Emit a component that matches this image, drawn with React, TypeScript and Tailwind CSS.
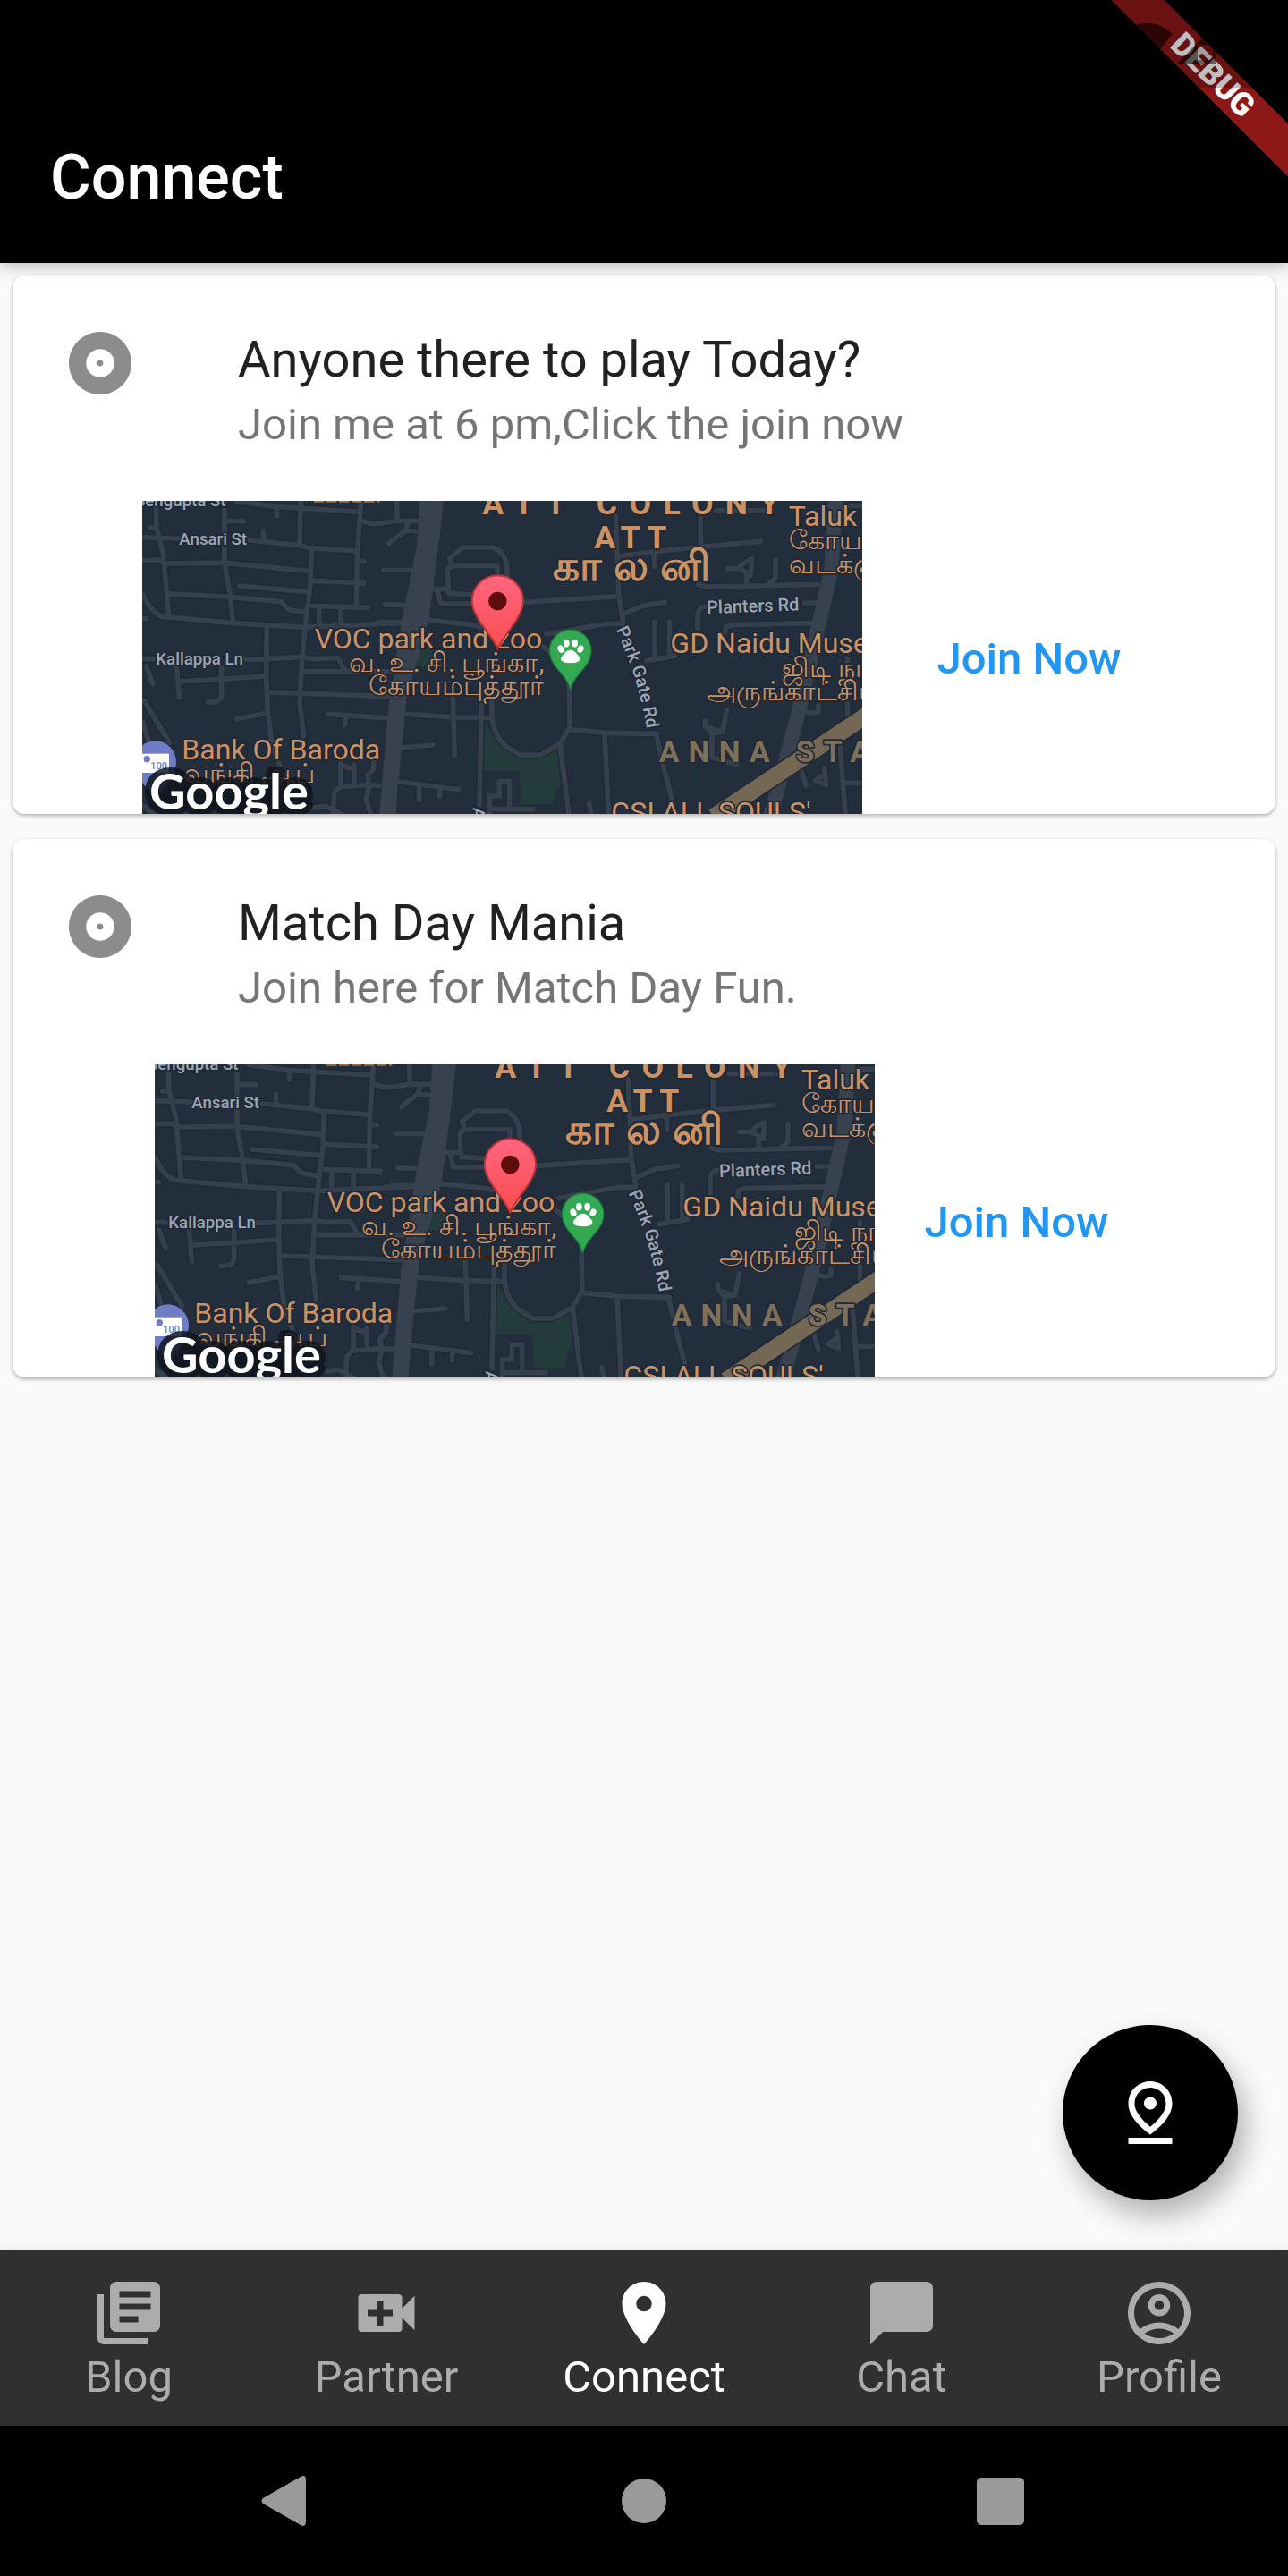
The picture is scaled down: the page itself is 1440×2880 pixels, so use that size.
import React, { useState } from 'react';
import {
  MdAlbum,
  MdChatBubble,
  MdLibraryBooks,
  MdLocationOn,
  MdOutlineAccountCircle,
  MdOutlinePinDrop,
  MdVideoCall,
} from 'react-icons/md';

const events = [
  {
    title: 'Anyone there to play Today?',
    subtitle: 'Join me at 6 pm,Click the join now',
    gap: 'gap-14',
  },
  {
    title: 'Match Day Mania',
    subtitle: 'Join here for Match Day Fun.',
    gap: 'gap-7',
  },
];

const tabs = [
  { name: 'Blog', Icon: MdLibraryBooks },
  { name: 'Partner', Icon: MdVideoCall },
  { name: 'Connect', Icon: MdLocationOn },
  { name: 'Chat', Icon: MdChatBubble },
  { name: 'Profile', Icon: MdOutlineAccountCircle },
];

const streets = [
  // west side
  'M70 30 L72 120 L95 210 L112 410 M24 152 L145 156 M50 120 H72 M24 230 L80 228 L105 240 L300 238 L585 265',
  'M300 60 V240 L318 340 L328 430 M300 98 H365 M385 162 L545 178 L590 188 L740 198 M430 130 V160',
  'M340 32 L480 50 L745 66 M475 50 V80 M556 30 L552 175 M757 40 L745 210 L742 380 M752 232 H768 M598 298 L768 306',
  'M592 195 L588 310 L575 410 L560 560 L552 700 L565 820 M350 315 L580 335 M112 342 L315 352 L490 368 L515 395 L575 404',
  'M595 382 L780 388 M24 340 Q50 400 90 418 L330 440 L570 454 M570 454 L890 440 M24 425 H38',
  'M442 460 L440 620 L445 740 L460 850 L490 930 M365 562 L440 560 L560 553 L600 560 L680 556 L705 600 M24 560 H60',
  'M140 590 L148 690 M148 636 L290 628 L435 618 M290 590 V680 Q290 706 245 706 M38 585 L60 645',
  'M570 602 L870 602 M455 672 L850 686 M340 762 L440 742 M650 745 L845 758 M707 755 L703 782',
  'M617 390 V450 M690 390 V450 M30 700 L115 840 M26 770 L44 830',
  // around the main street
  'M910 745 L1060 755 L1190 758 M1066 690 L1072 886 M890 858 L998 849 M885 972 L1085 998 M953 985 V1035 M1022 992 V1022',
  'M878 30 L880 95 M765 98 L800 108 L880 97 L950 97 M915 108 L905 130 L852 172 M905 130 L940 132',
  'M834 262 H930 M838 377 L910 380 M788 445 L820 437 H900',
  'M1060 235 L1055 222 L1100 186 H1200 Q1240 202 1248 250 V300 M1215 290 V248 H1072 Q1046 248 1048 272 L1052 340 L1130 345',
  'M990 325 H1040 M1015 330 L1025 375 H1130 M985 430 L1130 445 L1230 470',
  'M690 910 V990 M735 915 V970 M690 915 L735 930 M800 905 V930 L780 950 L785 990 L775 1030 L790 1080 M690 985 L668 1010 L664 1080 M690 990 L785 982 L820 985',
  'M24 1050 L60 1080 M590 1060 L640 1055 L690 1080 M1162 690 L1155 1050 M1190 1080 V1020 H1222 V970 H1256 V1062 M1190 1064 H1335',
  // zoo ring and east side
  'M1300 370 L1620 350 M1380 478 L1580 442 L1635 442 M1612 80 L1622 340 L1637 435 M1370 520 L1395 540',
  'M1455 640 L1458 790 L1425 845 L1360 882 H1290 L1240 850 Q1200 810 1197 750 V690',
  'M1458 796 L1580 808 L1750 811 M1425 845 L1455 1080 M1575 815 L1588 1080 M1748 815 L1772 920 L1802 1035 M1523 1045 L1530 1080',
  'M1622 216 L1740 200 L1900 184 L2100 166 M1897 85 V184 M1740 200 L1742 250 M1637 410 L1700 382 L1778 370',
  'M1890 310 L1915 318 L2290 310 M1985 257 H2030 L2065 280 L2068 224 L2032 245 V262 M2050 280 V312 M2148 228 V290 L2125 308',
  'M1887 475 V420 Q1885 390 1912 384 M1980 470 V455 L2000 446 L2270 440 M1743 435 V560 M1793 435 V545 M1715 566 L1810 550 M2245 372 H2290',
  'M1985 730 L1970 805 L1935 808 L1912 786 V766 M1935 810 V890 L2020 915 M1912 786 L1970 805 M2292 715 V738 L2268 742 L2245 735',
  'M2365 850 L2382 1080 M2382 976 H2430 M2390 710 V760 M2235 935 L2250 985 M2312 925 L2318 984 L2282 968 L2315 945 M1950 62 H2110 M2330 46 H2439 M2390 560 V640',
];

function PlaceLabel({ x, y, size, anchor, weight, spacing, color, rotate, children }: {
  x: number;
  y: number;
  size: string;
  anchor?: 'end';
  weight?: string;
  spacing?: string;
  color?: string;
  rotate?: number;
  children: React.ReactNode;
}) {
  return (
    <text
      x={x}
      y={y}
      textAnchor={anchor}
      transform={rotate ? `rotate(${rotate} ${x} ${y})` : undefined}
      className={`${size} ${weight ?? 'font-normal'} ${spacing ?? ''} ${color ?? 'fill-[#cd9263]'}`}
      stroke="#1f2937"
      strokeWidth="10"
      strokeLinejoin="round"
      paintOrder="stroke"
    >
      {children}
    </text>
  );
}

function MapPreview({ id }: { id: string }) {
  const road = 'fill-[#9ca5b3]';
  return (
    <svg viewBox="24 30 2415 1050" className="block w-[805px] h-[350px] shrink-0 bg-[#232e3d]" role="img" aria-label="Map of VOC park and zoo">
      <defs>
        <linearGradient id={`${id}-pin`} x1="0" y1="0" x2="0" y2="1">
          <stop offset="0" stopColor="#ff6580" />
          <stop offset="1" stopColor="#fb4d50" />
        </linearGradient>
        <path id={`${id}-gate`} d="M1612 462 Q1690 620 1722 830" />
      </defs>

      <path d="M1172 768 L1210 830 L1290 890 H1360 L1415 865 L1427 990 L1410 995 L1400 1048 H1295 L1290 935 H1170 Z M950 520 H1012 L1000 585 H930 Z" fill="#243b3c" />

      <g fill="none" stroke="#1f2937" strokeWidth="25" strokeLinecap="round" strokeLinejoin="round">
        {streets.map((d) => <path key={d} d={d} />)}
      </g>
      <g fill="none" stroke="#36404d" strokeWidth="17" strokeLinecap="round" strokeLinejoin="round">
        {streets.map((d) => <path key={d} d={d} />)}
      </g>
      <path d="M955 30 L945 180 L895 430 L870 600 L850 720 L820 1080 H875 L880 1000 L912 680 L940 590 L985 430 L1015 200 L1035 30 Z" fill="#38424f" />
      <path d="M2350 30 L2335 260 L2290 460 L2225 740 L2185 890 L2130 1090" fill="none" stroke="#38424f" strokeWidth="48" />
      <path d="M1940 1090 L2470 738" fill="none" stroke="#1f2835" strokeWidth="66" />
      <path d="M1940 1090 L2470 738" fill="none" stroke="#746855" strokeWidth="56" />

      <PlaceLabel x={0} y={48} size="text-[56px]" weight="font-medium" color={road}>Sengupta St</PlaceLabel>
      <PlaceLabel x={148} y={178} size="text-[56px]" weight="font-medium" color={road}>Ansari St</PlaceLabel>
      <PlaceLabel x={70} y={579} size="text-[56px]" weight="font-medium" color={road}>Kallappa Ln</PlaceLabel>
      <PlaceLabel x={1918} y={408} size="text-[60px]" weight="font-medium" color={road} rotate={-2}>Planters Rd</PlaceLabel>
      <PlaceLabel x={1134} y={1058} size="text-[56px]" weight="font-medium" color={road} rotate={92}>A</PlaceLabel>
      <text className="text-[60px] font-medium fill-[#9ca5b3]" stroke="#1f2937" strokeWidth="10" paintOrder="stroke">
        <textPath href={`#${id}-gate`}>Park Gate Rd</textPath>
      </text>

      <path d="M600 30 H820" stroke="#a86f35" strokeWidth="10" strokeDasharray="34 8" />
      <PlaceLabel x={1165} y={74} size="text-[107px]" weight="font-bold" spacing="tracking-[40px]">ATT COLONY</PlaceLabel>
      <PlaceLabel x={1540} y={188} size="text-[107px]" weight="font-bold" spacing="tracking-[22px]">ATT</PlaceLabel>
      <PlaceLabel x={1400} y={298} size="text-[140px]" weight="font-bold" spacing="tracking-[40px]">காலனி</PlaceLabel>
      <PlaceLabel x={2192} y={113} size="text-[96px]">Taluk</PlaceLabel>
      <PlaceLabel x={2192} y={193} size="text-[90px]">கோயம்பு</PlaceLabel>
      <PlaceLabel x={2192} y={272} size="text-[90px]">வடக்கு</PlaceLabel>
      <PlaceLabel x={602} y={524} size="text-[96px]">VOC park and zoo</PlaceLabel>
      <PlaceLabel x={1372} y={604} size="text-[90px]" anchor="end">வ. உ. சி. பூங்கா,</PlaceLabel>
      <PlaceLabel x={1372} y={682} size="text-[90px]" anchor="end">கோயம்புத்தூர்</PlaceLabel>
      <PlaceLabel x={1795} y={541} size="text-[96px]">GD Naidu Museum</PlaceLabel>
      <PlaceLabel x={2170} y={620} size="text-[90px]">ஜிடி நாயுடு</PlaceLabel>
      <PlaceLabel x={1918} y={698} size="text-[90px]">அருங்காட்சியகம்</PlaceLabel>
      <PlaceLabel x={1757} y={907} size="text-[101px]" weight="font-bold" spacing="tracking-[31px]" color="fill-[#80705a]">ANNA STATUE</PlaceLabel>
      <PlaceLabel x={1597} y={1108} size="text-[96px]">CSI ALL SOULS'</PlaceLabel>

      {/* bank marker */}
      <path d="M-2 905 a70 70 0 0 1 140 0 q0 50 -70 120 q-70 -70 -70 -120 Z" fill="#6f7cc6" />
      <path d="M24 878 H114 V942 H24 Z" fill="#fff" />
      <circle cx="40" cy="896" r="11" fill="#6f7cc6" />
      <text x="52" y="930" className="text-[33px] font-medium" fill="#6f7cc6">100</text>
      <PlaceLabel x={157} y={898} size="text-[96px]">Bank Of Baroda</PlaceLabel>
      <PlaceLabel x={162} y={975} size="text-[90px]">வங்கி ஆப்</PlaceLabel>
      <text
        x="48"
        y="1066"
        className="font-[Lato] text-[168px] font-bold"
        fill="#fff"
        stroke="#10151d"
        strokeOpacity="0.85"
        strokeWidth="42"
        strokeLinejoin="round"
        paintOrder="stroke"
      >
        Google
      </text>

      {/* zoo marker */}
      <path d="M1460 662 C1450 610 1391 590 1391 532 a69 69 0 0 1 138 0 C1529 590 1470 610 1460 662 Z" fill="#34a853" stroke="#1f8a3e" strokeWidth="4" />
      <g fill="#fff">
        <ellipse cx="1428" cy="527" rx="10" ry="13" transform="rotate(-25 1428 527)" />
        <ellipse cx="1447" cy="508" rx="10" ry="13" />
        <ellipse cx="1475" cy="508" rx="10" ry="13" />
        <ellipse cx="1494" cy="527" rx="10" ry="13" transform="rotate(25 1494 527)" />
        <path d="M1460 530 q14 0 24 16 q14 12 4 22 q-8 7 -28 5 q-20 2 -28 -5 q-10 -10 4 -22 q10 -16 24 -16 Z" />
      </g>

      {/* selected place */}
      <path d="M1216 526 C1196 478 1130 420 1130 366 a86 86 0 0 1 172 0 C1302 420 1236 478 1216 526 Z" fill={`url(#${id}-pin)`} stroke="#b93434" strokeWidth="6" />
      <circle cx="1216" cy="366" r="31" fill="#5e0c0c" />
    </svg>
  );
}

function EventCard({ event, id }: { event: (typeof events)[number]; id: string }) {
  return (
    <article className="rounded-[14px] bg-white shadow-[0_2px_4px_rgba(0,0,0,0.3)]">
      <div className="flex items-start px-14 pt-14 pb-14">
        <MdAlbum className="size-[84px] shrink-0 text-[#8c8c8c]" />
        <div className="ml-28 pt-[6px]">
          <h2 className="text-[56px] leading-[64px] text-[#212121]">{event.title}</h2>
          <p className="mt-3 text-[49px] leading-[58px] text-[#757575]">{event.subtitle}</p>
        </div>
      </div>
      <div className={`flex items-center justify-center ${event.gap}`}>
        <MapPreview id={id} />
        <button className="w-[262px] pt-5 pb-4 text-[49px] leading-[58px] font-medium text-[#2196f3] whitespace-nowrap cursor-pointer">Join Now</button>
      </div>
    </article>
  );
}

function DebugRibbon() {
  return (
    <div className="absolute top-0 right-0 size-[210px] overflow-hidden">
      <div className="absolute top-[63px] -left-[24px] w-[300px] rotate-45 bg-[#8e1717] text-center text-[36px] leading-[42px] font-black text-white">DEBUG</div>
      {/* status bar shade with its wifi and signal icons */}
      <svg viewBox="0 0 210 98" className="absolute top-0 left-0 h-[98px] w-[210px]" fill="#000">
        <path d="M0 0 H210 V98 H0 Z" fillOpacity="0.25" />
        <path d="M10 39 Q32 26 55 26 Q67 26 81 38 L53 72 Z" fillOpacity="0.6" />
        <path d="M86 71 L130 27 V50 H109 V71 Z" fillOpacity="0.55" />
        <path d="M109 71 V50 H130 V71 Z" fillOpacity="0.15" />
        <path d="M126 50 H130 V71 H109 V67 H126 Z" fillOpacity="0.4" />
      </svg>
    </div>
  );
}

export default function App() {
  const [active, setActive] = useState('Connect');

  return (
    <div className="flex min-h-screen flex-col bg-[#fafafa] font-[Roboto,'Noto_Sans',sans-serif]">
      <header className="relative z-10 bg-black px-14 pt-[157px] pb-[55px] shadow-[0_4px_16px_rgba(0,0,0,0.25)]">
        <h1 className="text-[70px] leading-[82px] font-medium text-white">Connect</h1>
        <DebugRibbon />
      </header>

      <main className="relative flex flex-1 flex-col gap-7 p-[14px]">
        {events.map((event, i) => (
          <EventCard key={event.title} event={event} id={`map-${i}`} />
        ))}
        <button
          aria-label="Drop a pin"
          className="absolute right-14 bottom-14 flex size-[196px] cursor-pointer items-center justify-center rounded-full bg-black text-white shadow-[8px_16px_32px_rgba(0,0,0,0.3)]"
        >
          <MdOutlinePinDrop className="size-[84px]" />
        </button>
      </main>

      <nav className="relative grid grid-cols-5 bg-[#303030] pt-7 pb-6 shadow-[0_0_14px_rgba(0,0,0,0.1)]">
        {tabs.map(({ name, Icon }) => (
          <button
            key={name}
            onClick={() => setActive(name)}
            className={`flex cursor-pointer flex-col items-center text-[49px] leading-[60px] ${active === name ? 'text-white' : 'text-[#acacac]'}`}
          >
            <Icon className="size-[84px]" />
            {name}
          </button>
        ))}
      </nav>

      <div className="grid grid-cols-3 justify-items-center bg-black px-[120px] py-14">
        <button aria-label="Back" className="cursor-pointer">
          <svg viewBox="0 0 56 56" className="size-14" fill="#9a9a9a">
            <path d="M2 25 L44 1 Q50 -2 50 5 V51 Q50 58 44 55 L2 31 Q-1 28 2 25 Z" />
          </svg>
        </button>
        <button aria-label="Home" className="cursor-pointer">
          <svg viewBox="0 0 56 56" className="size-14" fill="#9a9a9a">
            <circle cx="28" cy="28" r="25" />
          </svg>
        </button>
        <button aria-label="Recent apps" className="cursor-pointer">
          <svg viewBox="0 0 56 56" className="size-14" fill="#9a9a9a">
            <rect x="0" y="2" width="53" height="53" rx="5" />
          </svg>
        </button>
      </div>
    </div>
  );
}
